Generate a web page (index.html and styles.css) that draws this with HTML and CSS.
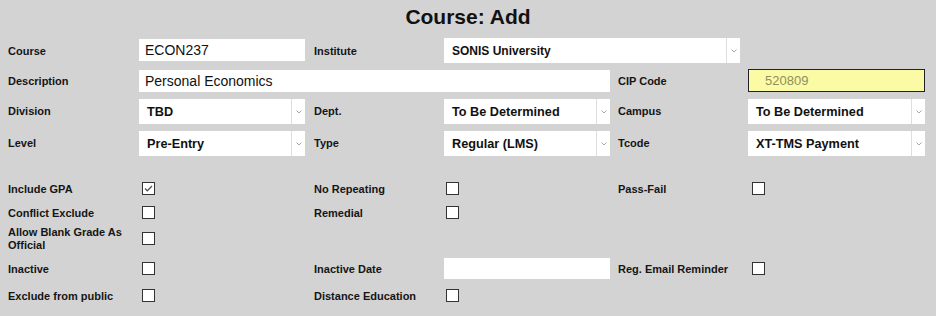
FILE: index.html
```html
<!DOCTYPE html>
<html>
<head>
<meta charset="utf-8">
<link rel="stylesheet" href="styles.css">
</head>
<body>
<h1 class="title">Course: Add</h1>

<div class="form-grid">
  <div class="lbl">Course</div>
  <div class="field text">ECON237</div>
  <div class="lbl">Institute</div>
  <div class="select wide"><span class="sel-text">SONIS University</span><span class="arrow"><svg width="6" height="4" viewBox="0 0 6 4"><path d="M0.5 0.5 L3 3 L5.5 0.5" fill="none" stroke="#a8a8a8" stroke-width="1"/></svg></span></div>
  <div></div>

  <div class="lbl">Description</div>
  <div class="field text desc">Personal Economics</div>
  <div class="lbl c5">CIP Code</div>
  <div class="field cip">520809</div>

  <div class="lbl">Division</div>
  <div class="select"><span class="sel-text">TBD</span><span class="arrow"><svg width="6" height="4" viewBox="0 0 6 4"><path d="M0.5 0.5 L3 3 L5.5 0.5" fill="none" stroke="#a8a8a8" stroke-width="1"/></svg></span></div>
  <div class="lbl">Dept.</div>
  <div class="select"><span class="sel-text">To Be Determined</span><span class="arrow"><svg width="6" height="4" viewBox="0 0 6 4"><path d="M0.5 0.5 L3 3 L5.5 0.5" fill="none" stroke="#a8a8a8" stroke-width="1"/></svg></span></div>
  <div class="lbl c5">Campus</div>
  <div class="select last"><span class="sel-text">To Be Determined</span><span class="arrow"><svg width="6" height="4" viewBox="0 0 6 4"><path d="M0.5 0.5 L3 3 L5.5 0.5" fill="none" stroke="#a8a8a8" stroke-width="1"/></svg></span></div>

  <div class="lbl">Level</div>
  <div class="select"><span class="sel-text">Pre-Entry</span><span class="arrow"><svg width="6" height="4" viewBox="0 0 6 4"><path d="M0.5 0.5 L3 3 L5.5 0.5" fill="none" stroke="#a8a8a8" stroke-width="1"/></svg></span></div>
  <div class="lbl">Type</div>
  <div class="select"><span class="sel-text">Regular (LMS)</span><span class="arrow"><svg width="6" height="4" viewBox="0 0 6 4"><path d="M0.5 0.5 L3 3 L5.5 0.5" fill="none" stroke="#a8a8a8" stroke-width="1"/></svg></span></div>
  <div class="lbl c5">Tcode</div>
  <div class="select last"><span class="sel-text">XT-TMS Payment</span><span class="arrow"><svg width="6" height="4" viewBox="0 0 6 4"><path d="M0.5 0.5 L3 3 L5.5 0.5" fill="none" stroke="#a8a8a8" stroke-width="1"/></svg></span></div>
</div>

<div class="check-grid">
  <div class="lbl">Include GPA</div>
  <div class="cbcell"><span class="cb"><svg width="11" height="11" viewBox="0 0 11 11"><path d="M2 5.5 L4.3 7.8 L9 3" fill="none" stroke="#555" stroke-width="1.3"/></svg></span></div>
  <div class="lbl">No Repeating</div>
  <div class="cbcell c4"><span class="cb"></span></div>
  <div class="lbl c5">Pass-Fail</div>
  <div class="cbcell c6"><span class="cb"></span></div>

  <div class="lbl">Conflict Exclude</div>
  <div class="cbcell"><span class="cb"></span></div>
  <div class="lbl">Remedial</div>
  <div class="cbcell c4"><span class="cb"></span></div>
  <div></div>
  <div></div>

  <div class="lbl">Allow Blank Grade As<br>Official</div>
  <div class="cbcell"><span class="cb"></span></div>
  <div></div>
  <div></div>
  <div></div>
  <div></div>

  <div class="lbl">Inactive</div>
  <div class="cbcell"><span class="cb"></span></div>
  <div class="lbl">Inactive Date</div>
  <div class="field date"></div>
  <div class="lbl c5">Reg. Email Reminder</div>
  <div class="cbcell c6"><span class="cb"></span></div>

  <div class="lbl">Exclude from public</div>
  <div class="cbcell"><span class="cb"></span></div>
  <div class="lbl">Distance Education</div>
  <div class="cbcell c4"><span class="cb"></span></div>
  <div></div>
  <div></div>
</div>
</body>
</html>
```

FILE: styles.css
```css
html, body {
  margin: 0;
  padding: 0;
  background: #d3d3d3;
  font-family: "Liberation Sans", Arial, sans-serif;
  color: #151515;
}

.title {
  margin: 0;
  padding-top: 5px;
  height: 24px;
  line-height: 24px;
  font-size: 21px;
  font-weight: 700;
  text-align: center;
  color: #111;
}

.form-grid,
.check-grid {
  display: grid;
  grid-template-columns: 131px 175px 130px 166px 138px 177px;
  padding-left: 8px;
}

.form-grid {
  margin-top: 10px;
  grid-template-rows: 24px 22px 25px 25px;
  row-gap: 7px;
}

.check-grid {
  margin-top: 20px;
  grid-template-rows: 24px 24px 28px 33px 20px;
}

.lbl {
  display: flex;
  align-items: center;
  font-size: 11px;
  font-weight: 700;
  line-height: 13px;
  white-space: nowrap;
}

.form-grid .lbl {
  align-self: stretch;
}

.check-grid .lbl {
  align-self: center;
  padding-top: 2px;
}

.lbl.c5 {
  padding-left: 8px;
}

.field {
  background: #fff;
  box-sizing: border-box;
  align-self: start;
}

.text {
  width: 166px;
  height: 22px;
  line-height: 22px;
  padding-left: 6px;
  font-size: 14px;
  color: #111;
}

.desc {
  grid-column: 2 / 5;
  width: 471px;
}

.cip {
  width: 177px;
  height: 23px;
  line-height: 21px;
  border: 1px solid #222;
  background: #fbfba6;
  padding-left: 16px;
  font-size: 13px;
  color: #8e8e5e;
  margin-top: -1px;
}

.date {
  width: 166px;
  height: 21px;
  align-self: center;
}

.select {
  display: flex;
  width: 166px;
  height: 25px;
  background: #fff;
  align-self: start;
}

.select.wide {
  grid-column: 4 / 6;
  width: 296px;
  margin-top: -1px;
}

.select.last {
  width: 177px;
}

.sel-text {
  flex: 1;
  padding-left: 8px;
  display: flex;
  align-items: center;
  font-size: 12.7px;
  font-weight: 700;
  color: #111;
  white-space: nowrap;
}

.select.wide .sel-text {
  font-size: 12px;
}

.arrow {
  width: 13px;
  border-left: 1px solid #dedede;
  display: flex;
  align-items: center;
  justify-content: center;
}

.cbcell {
  display: flex;
  align-items: center;
  align-self: center;
  padding-left: 3px;
}

.cbcell.c4 {
  padding-left: 2px;
}

.cbcell.c6 {
  padding-left: 4px;
}

.cb {
  width: 13px;
  height: 13px;
  box-sizing: border-box;
  border: 1px solid #333;
  background: #fff;
  display: flex;
  align-items: center;
  justify-content: center;
}

.cb svg {
  display: block;
}
```
